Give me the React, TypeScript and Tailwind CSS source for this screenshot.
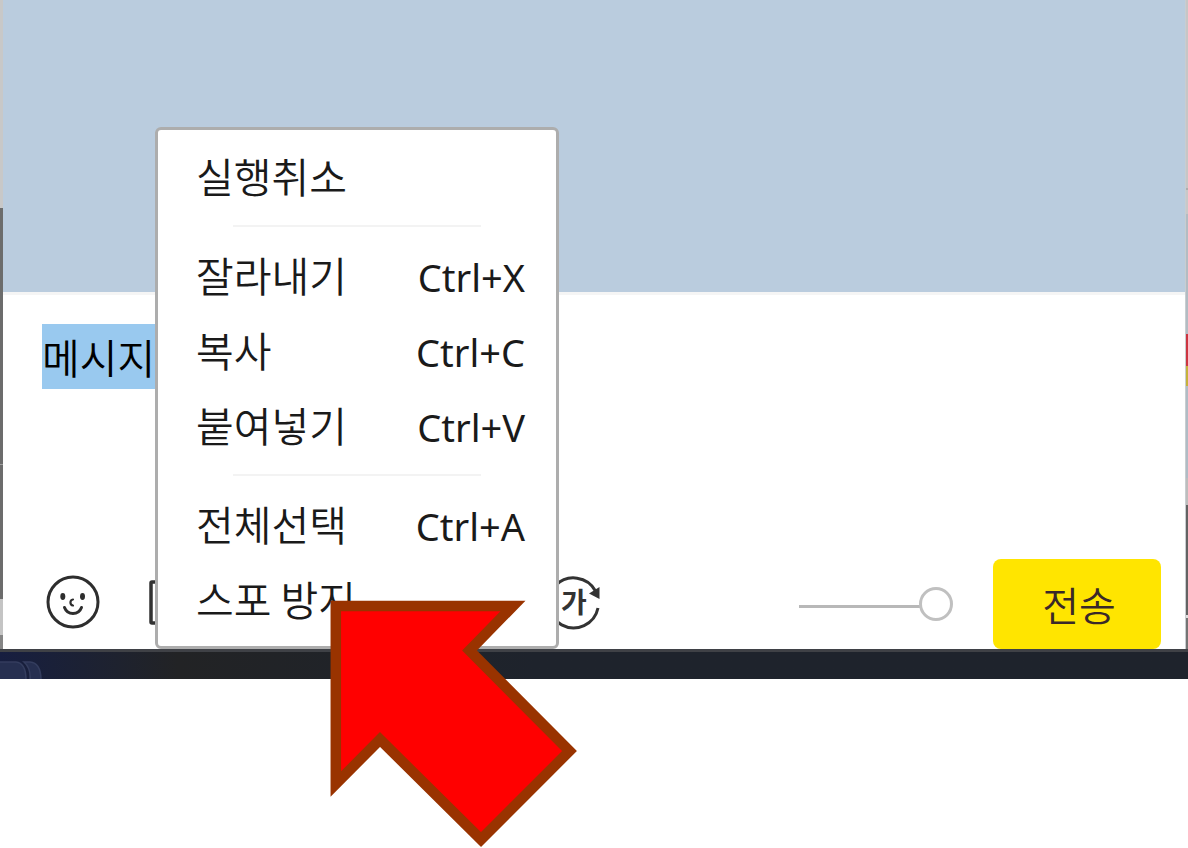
import { useEffect, useRef, useState } from 'react';

const FONT = "font-['Noto_Sans','Noto_Sans_CJK_KR',sans-serif]";
const FONT_KR = "font-['Noto_Sans_CJK_KR',sans-serif]";

const menuGroups = [
  [{ label: '실행취소', shortcut: '' }],
  [
    { label: '잘라내기', shortcut: 'Ctrl+X' },
    { label: '복사', shortcut: 'Ctrl+C' },
    { label: '붙여넣기', shortcut: 'Ctrl+V' },
  ],
  [
    { label: '전체선택', shortcut: 'Ctrl+A' },
    { label: '스포 방지', shortcut: '' },
  ],
];

const SmileIcon = () => (
  <svg className="h-14 w-14" viewBox="0 0 56 56" fill="none" stroke="#2e2e2e" strokeLinecap="round">
    <circle cx="28" cy="28" r="25" strokeWidth="3" />
    <ellipse cx="17.8" cy="22.5" rx="2.5" ry="3.4" fill="#2e2e2e" stroke="none" />
    <ellipse cx="37.5" cy="22.5" rx="2.5" ry="3.4" fill="#2e2e2e" stroke="none" />
    <path d="M28 25.5C24.6 26 24.6 31 28 31.5" strokeWidth="2.2" />
    <path d="M19.5 33.5C22.5 41.5 33.5 41.5 36.5 33.5" strokeWidth="3" />
  </svg>
);

const FrameIcon = () => (
  <svg className="h-14 w-14" viewBox="0 0 56 56" fill="none" stroke="#333333">
    <rect x="5" y="8" width="42" height="41" rx="1" strokeWidth="3.5" />
  </svg>
);

const ConvertIcon = () => (
  <svg className="h-14 w-14" viewBox="0 0 56 56" fill="none" stroke="#333333">
    <path d="M49.5 17A25 25 0 1 0 52 34" strokeWidth="3" />
    <path d="M43 19.5L53.5 13V25z" fill="#333333" stroke="none" />
    <text x="28" y="39" textAnchor="middle" fontSize="28" fontWeight="700" fill="#333333" stroke="none">
      가
    </text>
  </svg>
);

const Divider = () => <hr className="mx-[75px] my-[11px] border-t-2 border-[#f3f3f3]" />;

const ContextMenu = () => (
  <div
    role="menu"
    className="absolute top-[127px] left-[155px] flex w-[404px] flex-col rounded-md border-3 border-[#adadad] bg-white pt-[9px] pb-[9px]"
  >
    {menuGroups.map((group, i) => (
      <div key={i}>
        {i > 0 && <Divider />}
        {group.map((item) => (
          <button
            key={item.label}
            role="menuitem"
            className="flex h-[75px] w-full items-center justify-between pr-[31px] pl-[38px] text-[#1a1a1a]"
          >
            <span className={`pb-1 text-[41px] leading-[60px] font-[350] ${FONT_KR}`}>{item.label}</span>
            <span className="pt-0.5 text-[38px] leading-[60px]">{item.shortcut}</span>
          </button>
        ))}
      </div>
    ))}
  </div>
);

const Toolbar = () => {
  const [opacity, setOpacity] = useState(100);

  return (
    <div className="flex h-[90px] items-center pr-6 pl-[42px]">
      <div className="flex items-center pb-1">
        <button aria-label="이모티콘" className="mr-[45px]">
          <SmileIcon />
        </button>
        <button aria-label="캡처" className="mr-[344px]">
          <FrameIcon />
        </button>
        <button aria-label="말투 변환" className={FONT_KR}>
          <ConvertIcon />
        </button>
      </div>
      <input
        type="range"
        aria-label="투명도"
        value={opacity}
        onChange={(e) => setOpacity(Number(e.target.value))}
        className="mr-10 ml-auto h-[34px] w-[154px] appearance-none bg-[linear-gradient(#b8b8b8,#b8b8b8)] bg-[length:122px_3px] bg-[position:0_18px] bg-no-repeat [&::-webkit-slider-thumb]:h-[34px] [&::-webkit-slider-thumb]:w-[34px] [&::-webkit-slider-thumb]:appearance-none [&::-webkit-slider-thumb]:rounded-full [&::-webkit-slider-thumb]:border-3 [&::-webkit-slider-thumb]:border-[#c0c0c0] [&::-webkit-slider-thumb]:bg-white"
      />
      <button className={`h-full w-[168px] rounded-lg bg-[#ffe500] pl-1 text-[40px] font-[350] text-[#3a2929] ${FONT_KR}`}>
        전송
      </button>
    </div>
  );
};

const Arrow = () => (
  <svg
    className="pointer-events-none absolute top-[600px] left-[330px] h-[248px] w-[248px]"
    viewBox="0 0 248 248"
  >
    <path
      d="M5.8 6H183L139.5 50.5 239.5 151 151 239.5 50 139.5 5.8 184z"
      fill="#ff0000"
      stroke="#993300"
      strokeWidth="10.5"
      strokeMiterlimit="10"
    />
  </svg>
);

export default function App() {
  const [message, setMessage] = useState('메시지');
  const inputRef = useRef<HTMLTextAreaElement>(null);

  useEffect(() => {
    inputRef.current?.focus();
    inputRef.current?.select();
  }, []);

  return (
    <div className={`relative min-h-screen overflow-hidden bg-white ${FONT}`}>
      <div className="flex">
        {/* Desktop showing on the left of the window */}
        <div className="flex w-[3px] flex-col">
          <div className="h-52 bg-[#c8c8c8]" />
          <div className="h-64 bg-[#6c6c6c]" />
          <div className="h-px bg-[#a0a0a0]" />
          <div className="h-[134px] bg-[#6c6c6c]" />
          <div className="h-9 bg-[#c4c4c4]" />
          <div className="grow bg-[#858585]" />
        </div>

        <div className="flex min-w-0 grow flex-col">
          <div className="h-[292px] bg-[#baccde]" />
          <div className="h-[3px] bg-[#f5f5f5]" />
          <textarea
            ref={inputRef}
            aria-label="메시지 입력"
            value={message}
            onChange={(e) => setMessage(e.target.value)}
            className={`h-[264px] resize-none px-[39px] pt-[29px] text-[41px] leading-[65px] font-[350] text-black caret-transparent outline-none selection:bg-[#99c9ef] selection:text-black ${FONT_KR}`}
          />
          <Toolbar />
        </div>

        {/* Desktop showing on the right of the window */}
        <div className="flex w-[3px] flex-col border-l border-[#c9cdd0]">
          <div className="h-[188px] bg-[#c6c6c6]" />
          <div className="h-[2px] bg-[#adadad]" />
          <div className="h-6 bg-[#c8c8c8]" />
          <div className="h-[120px] bg-[#b2bcc3]" />
          <div className="h-8 bg-[#cc3540]" />
          <div className="h-5 bg-[#c5b23a]" />
          <div className="h-[92px] bg-[#b0bcc5]" />
          <div className="h-[27px] bg-[#bdbdbd]" />
          <div className="h-[110px] bg-[#636363]" />
          <div className="h-[3px] bg-[#e0e0e0]" />
          <div className="grow bg-[#747474]" />
        </div>
      </div>

      {/* Taskbar */}
      <div className="h-[30px] overflow-hidden border-t-3 border-[#3f4146] bg-linear-to-r from-[#171e40] via-[#222325] via-15% to-[#1e232c] to-45%">
        <svg className="h-[27px] w-12" viewBox="0 0 48 27" fill="#262f50" stroke="#343d5e" strokeWidth="1.5">
          <path d="M24 10h6q11 1 11 18H30Q31 16 24 10z" />
          <path d="M-2 10h18q10 1 10 18H-2z" />
        </svg>
      </div>

      <ContextMenu />
      <Arrow />
    </div>
  );
}
